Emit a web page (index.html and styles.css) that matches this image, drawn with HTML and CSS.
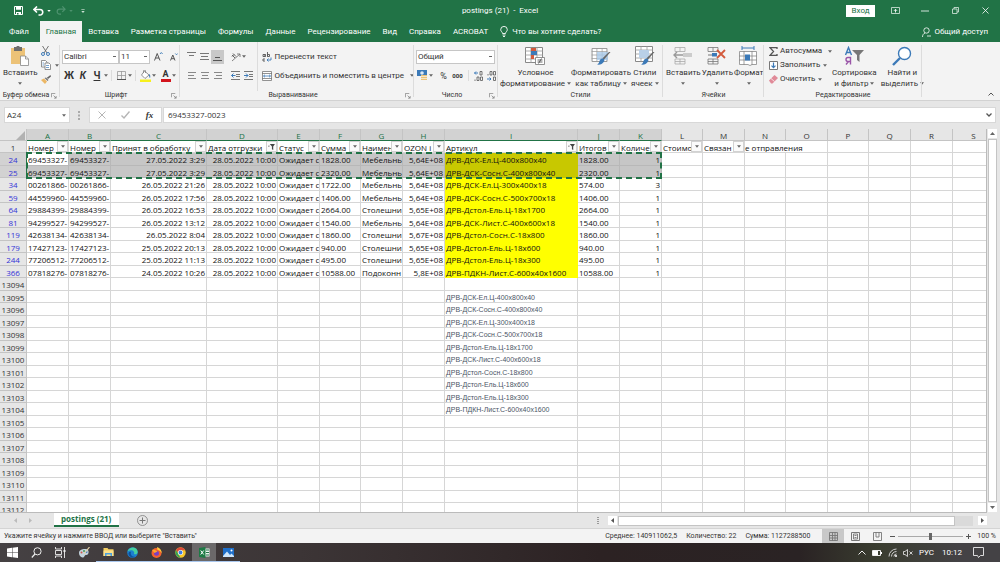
FILE: index.html
```html
<!DOCTYPE html>
<html lang="ru">
<head>
<meta charset="utf-8">
<title>postings (21) - Excel</title>
<link rel="stylesheet" href="styles.css">
</head>
<body>
<svg class="defs" aria-hidden="true">
  <symbol id="caret" viewBox="0 0 5 3"><path d="M0 0h5L2.5 3z" fill="#666"/></symbol>
  <symbol id="launch" viewBox="0 0 7 7"><path d="M.5 5V.5H5M3 3l3 3M6 3.500V6H3.500" fill="none" stroke="#777" stroke-width=".8"/></symbol>
  <symbol id="funnel" viewBox="0 0 8 7"><path d="M2 0h6L6 3v4L4.500 6V3zM0 2h2L1 3.500z" fill="#444"/></symbol>
  <symbol id="gridic" viewBox="0 0 18 16"><path d="M.5.5h17v15H.5z" fill="#fff" stroke="#888"/><path d="M0 4h18M0 8h18M0 12h18M6 0v16M12 0v16" stroke="#999" stroke-width=".8"/></symbol>
  <symbol id="brush" viewBox="0 0 14 14"><path d="M13.500.5L7 8 5.500 6.800 12 .5z" fill="#666"/><path d="M5.500 7c2 0 2.500 2 1.200 3.500C5.500 12.500 3 13.500 0 13c2-1 2-2 2.500-3.500S4 7 5.500 7z" fill="#3c7ab8"/></symbol>
</svg>

<header class="top">
  <div class="titlebar">
    <div class="quick">
      <button class="plain" aria-label="Сохранить"><svg width="9" height="9" viewBox="0 0 9 9"><path d="M.5.5h8v8h-8z" fill="none" stroke="#fff"/><path d="M2 .5h5v3.200H2zM2 6h5v3H2z" fill="#fff"/><path d="M3 7h1.500v1.500H3z" fill="#217346"/></svg></button>
      <button class="plain" aria-label="Отменить"><svg width="11" height="10" viewBox="0 0 11 10"><path d="M1 3.500h6a2.500 2.500 0 010 5.500H5.500M4 .5l-3 3 3 3" fill="none" stroke="#fff" stroke-width="1.600"/></svg></button>
      <svg width="4" height="2" viewBox="0 0 5 3"><path d="M0 0h5L2.500 3z" fill="#fff"/></svg>
      <button class="plain" aria-label="Повторить"><svg width="10" height="9" viewBox="0 0 11 10"><path d="M10 3.500H4A2.500 2.500 0 004 9h1.500M7 .5l3 3-3 3" fill="none" stroke="#4f9370" stroke-width="1.300"/></svg></button>
      <svg width="4" height="2" viewBox="0 0 5 3"><path d="M0 0h5L2.500 3z" fill="#4f9370"/></svg>
      <svg class="more" width="4" height="4" viewBox="0 0 5 6"><path d="M0 3h5L2.500 6z" fill="#cfe3d7"/><path d="M0 .7h5" stroke="#cfe3d7"/></svg>
    </div>
    <h1>postings (21)&nbsp; - &nbsp;Excel</h1>
    <div class="window">
      <button class="login">Вход</button>
      <button class="plain" aria-label="Параметры ленты"><svg width="9" height="7" viewBox="0 0 9 7"><path d="M.5.5h8v6h-8z" fill="none" stroke="#dcebe2" stroke-width=".8"/><path d="M4.500 5.500V2.500M3 3.800l1.500-1.500L6 3.800" fill="none" stroke="#fff" stroke-width=".9"/></svg></button>
      <button class="plain" aria-label="Свернуть"><svg width="8" height="8" viewBox="0 0 8 8"><path d="M0 4h8" stroke="#fff" stroke-width=".8"/></svg></button>
      <button class="plain" aria-label="Восстановить"><svg width="7" height="7" viewBox="0 0 7 7"><path d="M.5 2h4.500v4.500H.5zM2 2V.5h4.500V5H5" fill="none" stroke="#dcebe2" stroke-width=".8"/></svg></button>
      <button class="plain" aria-label="Закрыть"><svg width="7" height="7" viewBox="0 0 7 7"><path d="M.5.5l6 6M6.500.5l-6 6" stroke="#fff" stroke-width=".8"/></svg></button>
    </div>
  </div>
  <nav class="tabs">
    <a href="#">Файл</a><a href="#" class="on">Главная</a><a href="#">Вставка</a><a href="#">Разметка страницы</a><a href="#">Формулы</a><a href="#">Данные</a><a href="#">Рецензирование</a><a href="#">Вид</a><a href="#">Справка</a><a href="#">ACROBAT</a>
    <a href="#" class="tell"><svg width="8" height="11" viewBox="0 0 8 11"><path d="M2.500 7.500C2.500 6 .7 5.500.7 3.700a3.300 3.300 0 016.600 0c0 1.800-1.800 2.300-1.800 3.800zM2.500 9h3M3 10.500h2" fill="none" stroke="#fff" stroke-width=".9"/></svg>Что вы хотите сделать?</a>
    <a href="#" class="share"><svg width="9" height="10" viewBox="0 0 9 10"><circle cx="4.500" cy="3.500" r="2.700" fill="none" stroke="#fff" stroke-width=".8"/><path d="M.5 10C.5 8 1.500 6.500 3 6M5 9h4" fill="none" stroke="#fff" stroke-width=".8"/></svg>Общий доступ</a>
  </nav>
</header>

<section class="ribbon">
  <div class="group clip">
    <div class="body">
      <button class="big"><svg width="20" height="20" viewBox="0 0 20 20"><path d="M1 2h14v16H1z" fill="#ecc277"/><path d="M4 1h2.500a1.500 1.500 0 013 0H12v4H4z" fill="#6d6d6d"/><path d="M10.500 10h5l3 3v6.500h-8z" fill="#fff" stroke="#888" stroke-width=".8"/><path d="M15.500 10v3h3" fill="none" stroke="#888" stroke-width=".8"/></svg><span>Вставить</span><svg class="dd"><use href="#caret"/></svg></button>
      <div class="stack">
        <button class="plain" aria-label="Вырезать"><svg width="9" height="10" viewBox="0 0 9 10"><path d="M1.500 0L6 7M7.500 0L3 7" stroke="#666" stroke-width=".9"/><circle cx="2" cy="8" r="1.500" fill="none" stroke="#3c7ab8"/><circle cx="7" cy="8" r="1.500" fill="none" stroke="#3c7ab8"/></svg></button>
        <button class="plain" aria-label="Копировать"><svg width="10" height="10" viewBox="0 0 10 10"><path d="M.5.5h4l1.500 1.500v5H.5z" fill="#fff" stroke="#777" stroke-width=".8"/><path d="M4 3h4l1.500 1.500v5H4z" fill="#fff" stroke="#777" stroke-width=".8"/><path d="M5 5.500h3M5 7.500h3M1.500 3H3M1.500 5H3" stroke="#3c7ab8" stroke-width=".7"/></svg><svg class="dd"><use href="#caret"/></svg></button>
        <button class="plain" aria-label="Формат по образцу"><svg width="10" height="9" viewBox="0 0 10 9"><path d="M9.500 0L10 1.500 7 4 5.800 2.800z" fill="#666"/><path d="M5 2.500l2.500 2.500-1 1-3-3z" fill="#777"/><path d="M3 3.500L6 6.500 4 9 0 5z" fill="#ecb765"/></svg></button>
      </div>
    </div>
    <h2>Буфер обмена<svg class="ln"><use href="#launch"/></svg></h2>
  </div>

  <div class="group font">
    <div class="body rows">
      <div class="row">
        <select class="fname" aria-label="Шрифт"><option>Calibri</option></select><select class="fsize" aria-label="Размер"><option>11</option></select>
        <button class="tool wide" aria-label="Увеличить шрифт"><svg width="9" height="9" viewBox="0 0 9 9"><path d="M.5 8.500L3.200 1.500 6 8.500M1.500 6h3.500" fill="none" stroke="#555"/><path d="M6 2l1.300-1.500L8.600 2" fill="none" stroke="#3c7ab8" stroke-width=".9"/></svg></button><button class="tool" aria-label="Уменьшить шрифт"><svg width="8" height="8" viewBox="0 0 8 8"><path d="M.5 7.500L2.800 2 5 7.500M1.300 5.700h3" fill="none" stroke="#555"/><path d="M5.300.5l1.200 1.300L7.700.5" fill="none" stroke="#3c7ab8" stroke-width=".9"/></svg></button>
      </div>
      <div class="row tight">
        <button class="tool glyph"><b>Ж</b></button><button class="tool glyph"><b><i>К</i></b></button><button class="tool glyph"><b><u>Ч</u></b></button><svg class="dd"><use href="#caret"/></svg>
        <i class="vr"></i>
        <button class="tool" aria-label="Границы"><svg width="9" height="9" viewBox="0 0 9 9"><path d="M.5.5h8v8h-8zM4.500 0v9M0 4.500h9" fill="none" stroke="#999" stroke-width=".8"/><path d="M0 8.500h9" stroke="#555"/></svg></button><svg class="dd"><use href="#caret"/></svg>
        <i class="vr"></i>
        <button class="tool" aria-label="Цвет заливки"><svg width="11" height="12" viewBox="0 0 11 12"><path d="M4.500 1L9 5 5 8.500 1.500 5z" fill="#fff" stroke="#777" stroke-width=".8"/><path d="M3.500 3V1a1 1 0 012 0v2" fill="none" stroke="#777" stroke-width=".7"/><path d="M9 4c1.500 1 1.500 2.500 1 4-.8-.5-1-2-1-4z" fill="#3c7ab8"/><path d="M0 9.500h11V12H0z" fill="#f7f01c"/></svg></button><svg class="dd"><use href="#caret"/></svg>
        <button class="tool colour" aria-label="Цвет текста"><span class="fc">A</span></button><svg class="dd"><use href="#caret"/></svg>
      </div>
    </div>
    <h2>Шрифт<svg class="ln"><use href="#launch"/></svg></h2>
  </div>

  <div class="group align">
    <div class="body split">
      <div class="rows acol">
        <div class="row">
          <button class="tool" aria-label="По верхнему краю"><svg width="9" height="9"><path d="M0 .5h9M2 3.500h5" stroke="#777"/></svg></button><button class="tool" aria-label="По середине"><svg width="9" height="9"><path d="M0 1.500h9M1 4.500h7M0 7.500h9" stroke="#777"/></svg></button><button class="tool pressed" aria-label="По нижнему краю"><svg width="9" height="9"><path d="M2 5.500h5M0 8.500h9" stroke="#555"/></svg></button>
          <button class="tool after" aria-label="Ориентация"><svg width="10" height="10" viewBox="0 0 10 10"><path d="M1 9L9 2M6 2h3v3" fill="none" stroke="#777" stroke-width=".9"/><path d="M1 3l3 3M2 1.500l3 3M1 4.500l2-2" stroke="#555" stroke-width=".9"/></svg></button><svg class="dd"><use href="#caret"/></svg>
        </div>
        <div class="row">
          <button class="tool" aria-label="По левому краю"><svg width="8" height="7"><path d="M0 .5h8M0 3.500h6M0 6.500h8" stroke="#888"/></svg></button><button class="tool" aria-label="По центру"><svg width="8" height="7"><path d="M0 .5h8M1 3.500h6M0 6.500h8" stroke="#888"/></svg></button><button class="tool" aria-label="По правому краю"><svg width="8" height="7"><path d="M0 .5h8M2 3.500h6M0 6.500h8" stroke="#888"/></svg></button>
          <button class="tool after" aria-label="Уменьшить отступ"><svg width="9" height="9"><path d="M0 .5h9M5 3.500h4M5 5.500h4M0 8.500h9" stroke="#777"/><path d="M4.500 4.500H.5M2.500 2.500l-2 2 2 2" fill="none" stroke="#3c7ab8"/></svg></button><button class="tool" aria-label="Увеличить отступ"><svg width="9" height="9"><path d="M0 .5h9M5 3.500h4M5 5.500h4M0 8.500h9" stroke="#777"/><path d="M0 4.500h4M2 2.500l2 2-2 2" fill="none" stroke="#3c7ab8"/></svg></button>
        </div>
      </div>
      <div class="rows wrapcol">
        <div class="row"><button class="text"><svg width="10" height="10" viewBox="0 0 10 10"><path d="M1 2.500h2v2H1zM3.300 2v3M5.500 0v4.500M5.500 2.500h2v2h-2zM3 7H1v2h2" fill="none" stroke="#555" stroke-width=".9"/><path d="M9 5.500v2.500H5M6.500 6.500L5 8l1.500 1.500" fill="none" stroke="#3c7ab8" stroke-width=".9"/></svg>Перенести текст</button></div>
        <div class="row"><button class="text"><svg width="10" height="10" viewBox="0 0 10 10"><path d="M.5.500h9v9h-9zM0 2.500h10M0 7.500h10" fill="#fff" stroke="#777" stroke-width=".8"/><path d="M1.500 5h7M3 3.700L1.500 5 3 6.300M7 3.700L8.500 5 7 6.300" fill="none" stroke="#3c7ab8" stroke-width=".8"/></svg>Объединить и поместить в центре<svg class="dd"><use href="#caret"/></svg></button></div>
      </div>
    </div>
    <h2>Выравнивание<svg class="ln"><use href="#launch"/></svg></h2>
  </div>

  <div class="group number">
    <div class="body rows">
      <div class="row"><select class="fmt" aria-label="Числовой формат"><option>Общий</option></select></div>
      <div class="row">
        <button class="tool" aria-label="Финансовый формат"><svg width="11" height="11" viewBox="0 0 11 11"><path d="M0 0h10v6H0z" fill="#3c7ab8"/><circle cx="5" cy="3" r="1.800" fill="#dce9f5"/><path d="M4 5h6v5H4z" fill="#ecc277"/><path d="M4 6.500h6M4 8.500h6" stroke="#fff" stroke-width=".6"/></svg></button><svg class="dd"><use href="#caret"/></svg>
        <button class="tool num">%</button><button class="tool zero">000</button>
        <i class="vr"></i>
        <button class="tool" aria-label="Увеличить разрядность"><svg width="9" height="10" viewBox="0 0 9 10"><path d="M4 2H.5M2 .5L.5 2 2 3.500" fill="none" stroke="#3c7ab8"/><path d="M6 .5h2v3.500H6zM3 6h2v3.500H3zM6.500 6h2v3.500h-2zM1 8.500V10" fill="none" stroke="#555" stroke-width=".8"/></svg></button><button class="tool" aria-label="Уменьшить разрядность"><svg width="9" height="10" viewBox="0 0 9 10"><path d="M0 8h4M2.500 6.500L4 8 2.500 9.500" fill="none" stroke="#3c7ab8"/><path d="M3 .5h2v3.500H3zM6.500.5h2v3.500h-2zM6.500 6h2v3.500h-2zM1 3v1.500" fill="none" stroke="#555" stroke-width=".8"/></svg></button>
      </div>
    </div>
    <h2>Число<svg class="ln"><use href="#launch"/></svg></h2>
  </div>

  <div class="group styles">
    <div class="body">
      <button class="big two"><svg width="20" height="20" viewBox="0 0 20 20"><use href="#gridic" width="18" height="16" y="1"/><path d="M6 2h5v3H6zM6 9h3v4H6z" fill="#d35a3c"/><path d="M6 5h6v4H6z" fill="#3c7ab8"/><path d="M10.500 11.500h9v7h-9z" fill="#fff" stroke="#777" stroke-width=".8"/><path d="M12.500 14h5M12.500 16h5M16.500 12.500l-3 5" stroke="#444" stroke-width=".8"/></svg><span>Условное<br>форматирование <svg class="dd"><use href="#caret"/></svg></span></button>
      <button class="big two"><svg width="20" height="20" viewBox="0 0 20 20"><use href="#gridic" width="17" height="14" y="2"/><path d="M6 6h11v8H6z" fill="#a9c9e8" opacity=".8"/><use href="#brush" x="6" y="5" width="14" height="15"/></svg><span>Форматировать<br>как таблицу <svg class="dd"><use href="#caret"/></svg></span></button>
      <button class="big two"><svg width="20" height="20" viewBox="0 0 20 20"><use href="#gridic" width="18" height="16" y="0"/><path d="M4 4h10v8H4z" fill="#b9d0e8"/><use href="#brush" x="6" y="5" width="14" height="15"/></svg><span>Стили<br>ячеек <svg class="dd"><use href="#caret"/></svg></span></button>
    </div>
    <h2>Стили</h2>
  </div>

  <div class="group cells">
    <div class="body">
      <button class="big"><svg width="20" height="20" viewBox="0 0 20 20"><path d="M2 1.500h10v4H2zM7 1.500v4M2 13h10v5H2zM7 13v5M2 15.500h10" fill="none" stroke="#aaa" stroke-width=".8"/><path d="M10 7h9v4h-9z" fill="#ccc"/><path d="M10 9H1M4 6L1 9l3 3" fill="none" stroke="#999" stroke-width="1.400"/></svg><span>Вставить</span><svg class="dd"><use href="#caret"/></svg></button>
      <button class="big"><svg width="20" height="20" viewBox="0 0 20 20"><path d="M1 1.500h10v4H1zM6 1.500v4M1 13h10v5H1zM6 13v5M1 15.500h10" fill="none" stroke="#777" stroke-width=".8"/><path d="M5 7h5v3.500H5z" fill="#3c7ab8"/><path d="M1 9h4" stroke="#777"/><path d="M10 4l8 8M18 4l-8 8" stroke="#d35a3c" stroke-width="1.800"/></svg><span>Удалить</span><svg class="dd"><use href="#caret"/></svg></button>
      <button class="big"><svg width="20" height="20" viewBox="0 0 20 20"><path d="M3 2h12M3 0v4M15 0v4" stroke="#3c7ab8"/><path d="M.5 5.500h17v13H13l-2 1-2-1H.5zM5 5v14M13 5v14M0 10h18M0 14h18" fill="#fff" stroke="#888" stroke-width=".8"/><path d="M6 8.500h5v6H6z" fill="#3c7ab8"/></svg><span>Формат</span><svg class="dd"><use href="#caret"/></svg></button>
    </div>
    <h2>Ячейки</h2>
  </div>

  <div class="group edit">
    <div class="body">
      <div class="stack lines">
        <button class="text"><svg width="9" height="9" viewBox="0 0 9 9"><path d="M8 2V.7H1L4.500 4.500 1 8.300h7V7" fill="none" stroke="#555" stroke-width="1.300"/></svg>Автосумма <svg class="dd far"><use href="#caret"/></svg></button>
        <button class="text"><svg width="9" height="9" viewBox="0 0 9 9"><path d="M.5.5h8v8h-8z" fill="#fff" stroke="#777"/><path d="M4.500 1.500v5M2.500 4.700l2 2 2-2" fill="none" stroke="#3c7ab8" stroke-width="1.200"/></svg>Заполнить<svg class="dd"><use href="#caret"/></svg></button>
        <button class="text"><svg width="9" height="9" viewBox="0 0 9 9"><path d="M0 5.500L5.500 0 9 3 3.500 8.500H2z" fill="#e08a98"/><path d="M2 3.500L5.500 6.500" stroke="#fff" stroke-width=".7"/></svg>Очистить<svg class="dd"><use href="#caret"/></svg></button>
      </div>
      <button class="big two"><svg width="20" height="20" viewBox="0 0 20 20"><path d="M1.500 9L4.500 1.500 7.500 9M2.500 6.500h4" fill="none" stroke="#3c7ab8" stroke-width="1.400"/><path d="M6.500 18.500V11.500H4a2 2 0 000 4h2.500M4.500 15.500l-2.500 3" fill="none" stroke="#9a55a8" stroke-width="1.400"/><path d="M8 4h12l-4.500 5v7L13 14V9z" fill="#777"/></svg><span>Сортировка<br>и фильтр <svg class="dd"><use href="#caret"/></svg></span></button>
      <button class="big two"><svg width="20" height="20" viewBox="0 0 20 20"><circle cx="12.500" cy="7.500" r="6" fill="#fff" stroke="#3c7ab8" stroke-width="1.400"/><path d="M8 12l-7 7" stroke="#3c7ab8" stroke-width="2.400"/></svg><span>Найти и<br>выделить <svg class="dd"><use href="#caret"/></svg></span></button>
    </div>
    <h2>Редактирование</h2>
  </div>
  <button class="plain collapse" aria-label="Свернуть ленту"><svg width="6" height="4"><path d="M.5 3.500L3 1l2.500 2.500" fill="none" stroke="#555"/></svg></button>
</section>

<section class="formula">
  <div class="namebox"><input aria-label="Имя" value="A24"><svg class="dd"><use href="#caret"/></svg></div>
  <svg class="dots" width="3" height="9"><path d="M1 0v2M1 3.500v2M1 7v2" stroke="#aaa" stroke-width="2"/></svg>
  <div class="fx">
    <button class="plain" aria-label="Отмена"><svg width="8" height="8"><path d="M.5.5l7 7M7.500.5l-7 7" stroke="#b5b5b5"/></svg></button>
    <button class="plain" aria-label="Ввод"><svg width="9" height="8"><path d="M.5 4.500L3 7l5.500-6.500" fill="none" stroke="#b5b5b5" stroke-width="1.400"/></svg></button>
    <button class="plain fn" aria-label="Вставить функцию"><i>fx</i></button>
  </div>
  <div class="fbox"><input aria-label="Строка формул" value="69453327-0023"><svg width="6" height="4" viewBox="0 0 6 4"><path d="M.5.500L3 3 5.500.5" fill="none" stroke="#555" stroke-width="1.300"/></svg></div>
</section>

<main class="work">
  <div class="sheet">
    <table>
      <colgroup><col class="rh"><col class="w42"><col class="w42"><col class="w96"><col class="w71"><col class="w42"><col class="w41"><col class="w42"><col class="w42"><col class="w133"><col class="w42"><col class="w42"><col class="w41"><col class="w42"><col class="w41"><col class="w42"><col class="w41"><col class="w42"><col class="w42"><col class="w42"></colgroup>
      <thead>
        <tr><th class="corner"><svg width="9" height="9"><path d="M9 0v9H0z" fill="#b2b2b2"/></svg><th class="s">A<th class="s">B<th class="s">C<th class="s">D<th class="s">E<th class="s">F<th class="s">G<th class="s">H<th class="s">I<th class="s">J<th class="s">K<th>L<th>M<th>N<th>O<th>P<th>Q<th>R<th>S
      </thead>
      <tbody>
        <tr class="names"><th>1
          <td><div><span>Номер</span><button aria-label="Фильтр"><svg class="dd"><use href="#caret"/></svg></button></div>
          <td><div><span>Номер</span><button aria-label="Фильтр"><svg class="dd"><use href="#caret"/></svg></button></div>
          <td><div><span>Принят в обработку</span><button aria-label="Фильтр"><svg class="dd"><use href="#caret"/></svg></button></div>
          <td><div><span>Дата отгрузки</span><button aria-label="Фильтр"><svg class="fu"><use href="#funnel"/></svg></button></div>
          <td><div><span>Статус</span><button aria-label="Фильтр"><svg class="dd"><use href="#caret"/></svg></button></div>
          <td><div><span>Сумма</span><button aria-label="Фильтр"><svg class="dd"><use href="#caret"/></svg></button></div>
          <td><div><span>Наимен</span><button aria-label="Фильтр"><svg class="dd"><use href="#caret"/></svg></button></div>
          <td><div><span>OZON i</span><button aria-label="Фильтр"><svg class="dd"><use href="#caret"/></svg></button></div>
          <td><div><span>Артикул</span><button aria-label="Фильтр"><svg class="fu"><use href="#funnel"/></svg></button></div>
          <td><div><span>Итогов</span><button aria-label="Фильтр"><svg class="dd"><use href="#caret"/></svg></button></div>
          <td><div><span>Количе</span><button aria-label="Фильтр"><svg class="dd"><use href="#caret"/></svg></button></div>
          <td><div><span>Стоимо</span><button aria-label="Фильтр"><svg class="dd"><use href="#caret"/></svg></button></div>
          <td><div><span>Связан</span><button aria-label="Фильтр"><svg class="dd"><use href="#caret"/></svg></button></div>
          <td colspan="2" class="spill">е отправления<td><td><td><td>
        <tr class="f sel"><th>24<td class="active">69453327-<td>69453327-<td class="r">27.05.2022 3:29<td class="r">28.05.2022 10:00<td>Ожидает с<td>1828.00<td>Мебельнь<td class="r">5,64E+08<td class="y">ДРВ-ДСК-Ел.Ц-400x800x40<td>1828.00<td class="r">1<td><td><td><td><td><td><td><td>
        <tr class="f sel"><th>25<td>69453327-<td>69453327-<td class="r">27.05.2022 3:29<td class="r">28.05.2022 10:00<td>Ожидает с<td>2320.00<td>Мебельнь<td class="r">5,64E+08<td class="y">ДРВ-ДСК-Сосн.С-400x800x40<td>2320.00<td class="r">1<td><td><td><td><td><td><td><td>
        <tr class="f"><th>34<td>00261866-<td>00261866-<td class="r">26.05.2022 21:26<td class="r">28.05.2022 10:00<td>Ожидает с<td>1722.00<td>Мебельнь<td class="r">5,64E+08<td class="y">ДРВ-ДСК-Ел.Ц-300x400x18<td>574.00<td class="r">3<td><td><td><td><td><td><td><td>
        <tr class="f"><th>59<td>44559960-<td>44559960-<td class="r">26.05.2022 17:56<td class="r">28.05.2022 10:00<td>Ожидает с<td>1406.00<td>Мебельнь<td class="r">5,64E+08<td class="y">ДРВ-ДСК-Сосн.С-500x700x18<td>1406.00<td class="r">1<td><td><td><td><td><td><td><td>
        <tr class="f"><th>64<td>29884399-<td>29884399-<td class="r">26.05.2022 16:53<td class="r">28.05.2022 10:00<td>Ожидает с<td>2664.00<td>Столешни<td class="r">5,65E+08<td class="y">ДРВ-Дстол-Ель.Ц-18x1700<td>2664.00<td class="r">1<td><td><td><td><td><td><td><td>
        <tr class="f"><th>81<td>94299527-<td>94299527-<td class="r">26.05.2022 13:12<td class="r">28.05.2022 10:00<td>Ожидает с<td>1540.00<td>Мебельнь<td class="r">5,64E+08<td class="y">ДРВ-ДСК-Лист.С-400x600x18<td>1540.00<td class="r">1<td><td><td><td><td><td><td><td>
        <tr class="f"><th>119<td>42638134-<td>42638134-<td class="r">26.05.2022 8:04<td class="r">28.05.2022 10:00<td>Ожидает с<td>1860.00<td>Столешни<td class="r">5,67E+08<td class="y">ДРВ-Дстол-Сосн.С-18x800<td>1860.00<td class="r">1<td><td><td><td><td><td><td><td>
        <tr class="f"><th>179<td>17427123-<td>17427123-<td class="r">25.05.2022 20:13<td class="r">28.05.2022 10:00<td>Ожидает с<td>940.00<td>Столешни<td class="r">5,65E+08<td class="y">ДРВ-Дстол-Ель.Ц-18x600<td>940.00<td class="r">1<td><td><td><td><td><td><td><td>
        <tr class="f"><th>244<td>77206512-<td>77206512-<td class="r">25.05.2022 11:13<td class="r">28.05.2022 10:00<td>Ожидает с<td>495.00<td>Столешни<td class="r">5,65E+08<td class="y">ДРВ-Дстол-Ель.Ц-18x300<td>495.00<td class="r">1<td><td><td><td><td><td><td><td>
        <tr class="f"><th>366<td>07818276-<td>07818276-<td class="r">24.05.2022 10:26<td class="r">28.05.2022 10:00<td>Ожидает с<td>10588.00<td>Подоконн<td class="r">5,8E+08<td class="y">ДРВ-ПДКН-Лист.С-600x40x1600<td>10588.00<td class="r">1<td><td><td><td><td><td><td><td>
        <tr><th>13094<td><td><td><td><td><td><td><td><td class="n"><td><td><td><td><td><td><td><td><td><td>
        <tr><th>13095<td><td><td><td><td><td><td><td><td class="n">ДРВ-ДСК-Ел.Ц-400x800x40<td><td><td><td><td><td><td><td><td><td>
        <tr><th>13096<td><td><td><td><td><td><td><td><td class="n">ДРВ-ДСК-Сосн.С-400x800x40<td><td><td><td><td><td><td><td><td><td>
        <tr><th>13097<td><td><td><td><td><td><td><td><td class="n">ДРВ-ДСК-Ел.Ц-300x400x18<td><td><td><td><td><td><td><td><td><td>
        <tr><th>13098<td><td><td><td><td><td><td><td><td class="n">ДРВ-ДСК-Сосн.С-500x700x18<td><td><td><td><td><td><td><td><td><td>
        <tr><th>13099<td><td><td><td><td><td><td><td><td class="n">ДРВ-Дстол-Ель.Ц-18x1700<td><td><td><td><td><td><td><td><td><td>
        <tr><th>13100<td><td><td><td><td><td><td><td><td class="n">ДРВ-ДСК-Лист.С-400x600x18<td><td><td><td><td><td><td><td><td><td>
        <tr><th>13101<td><td><td><td><td><td><td><td><td class="n">ДРВ-Дстол-Сосн.С-18x800<td><td><td><td><td><td><td><td><td><td>
        <tr><th>13102<td><td><td><td><td><td><td><td><td class="n">ДРВ-Дстол-Ель.Ц-18x600<td><td><td><td><td><td><td><td><td><td>
        <tr><th>13103<td><td><td><td><td><td><td><td><td class="n">ДРВ-Дстол-Ель.Ц-18x300<td><td><td><td><td><td><td><td><td><td>
        <tr><th>13104<td><td><td><td><td><td><td><td><td class="n">ДРВ-ПДКН-Лист.С-600x40x1600<td><td><td><td><td><td><td><td><td><td>
        <tr><th>13105<td><td><td><td><td><td><td><td><td class="n"><td><td><td><td><td><td><td><td><td><td>
        <tr><th>13106<td><td><td><td><td><td><td><td><td class="n"><td><td><td><td><td><td><td><td><td><td>
        <tr><th>13107<td><td><td><td><td><td><td><td><td class="n"><td><td><td><td><td><td><td><td><td><td>
        <tr><th>13108<td><td><td><td><td><td><td><td><td class="n"><td><td><td><td><td><td><td><td><td><td>
        <tr><th>13109<td><td><td><td><td><td><td><td><td class="n"><td><td><td><td><td><td><td><td><td><td>
        <tr><th>13110<td><td><td><td><td><td><td><td><td class="n"><td><td><td><td><td><td><td><td><td><td>
        <tr><th>13111<td><td><td><td><td><td><td><td><td class="n"><td><td><td><td><td><td><td><td><td><td>
        <tr><th>13112<td><td><td><td><td><td><td><td><td class="n"><td><td><td><td><td><td><td><td><td><td>
      </tbody>
    </table>
    <div class="ants"></div>
  </div>
  <div class="vscroll">
    <button aria-label="Вверх"><svg width="5" height="3"><path d="M0 3h5L2.500 0z" fill="#666"/></svg></button>
    <div class="thumb"></div>
    <button aria-label="Вниз"><svg width="5" height="3"><path d="M0 0h5L2.500 3z" fill="#666"/></svg></button>
  </div>
</main>

<div class="sheetbar">
  <div class="arrows"><svg width="3" height="5"><path d="M3 0v5L0 2.500z" fill="#bbb"/></svg><svg width="3" height="5"><path d="M0 0v5l3-2.500z" fill="#bbb"/></svg></div>
  <a href="#" class="stab">postings (21)</a>
  <button class="plain add" aria-label="Новый лист"><svg width="11" height="11" viewBox="0 0 11 11"><circle cx="5.500" cy="5.500" r="5" fill="none" stroke="#888" stroke-width=".9"/><path d="M5.500 2.500v6M2.500 5.500h6" stroke="#777"/></svg></button>
  <svg class="dots" width="3" height="8"><path d="M1 0v1M1 2v1M1 4v1M1 6v1" stroke="#999" stroke-width="2"/></svg>
  <div class="hscroll">
    <button aria-label="Влево"><svg width="3" height="5"><path d="M3 0v5L0 2.500z" fill="#555"/></svg></button>
    <div class="track"><div class="thumb"></div></div>
    <button aria-label="Вправо"><svg width="3" height="5"><path d="M0 0v5l3-2.500z" fill="#555"/></svg></button>
  </div>
</div>

<footer class="status">
  <span class="hint">Укажите ячейку и нажмите ВВОД или выберите "Вставить"</span>
  <span>Среднее: 140911062,5</span><span>Количество: 22</span><span>Сумма: 1127288500</span>
  <div class="views">
    <button class="on" aria-label="Обычный"><svg width="9" height="9"><path d="M.5.5h8v8h-8zM0 3.500h9M0 6h9M3.500 0v9M6 0v9" fill="none" stroke="#777" stroke-width=".9"/></svg></button>
    <button aria-label="Разметка страницы"><svg width="9" height="9"><path d="M.5.5h8v8h-8z" fill="none" stroke="#777"/><path d="M2.500 2h4v5h-4zM3.500 3.500h2M3.500 5.500h2" fill="none" stroke="#777" stroke-width=".9"/></svg></button>
    <button aria-label="Страничный"><svg width="9" height="9"><path d="M.5.5h8v8h-8zM3 0v5h3V0" fill="none" stroke="#777" stroke-width=".9"/></svg></button>
  </div>
  <div class="zoom"><button class="plain" aria-label="Уменьшить"><svg width="5" height="5"><path d="M0 2.500h5" stroke="#555"/></svg></button><input type="range" min="0" max="200" value="100" aria-label="Масштаб"><button class="plain" aria-label="Увеличить"><svg width="5" height="5"><path d="M0 2.500h5M2.500 0v5" stroke="#555"/></svg></button></div>
  <span class="pct">100 %</span>
</footer>

<div class="taskbar">
  <button aria-label="Пуск"><svg width="11" height="11" viewBox="0 0 11 11"><path d="M0 1.500L5 .8v4.500H0zM5.500.7L11 0v5.300H5.500zM0 5.800h5v4.400l-5-.7zM5.500 5.800H11V11l-5.500-.7z" fill="#fff"/></svg></button>
  <button aria-label="Поиск"><svg width="11" height="11" viewBox="0 0 11 11"><circle cx="6.500" cy="4.300" r="3.600" fill="none" stroke="#eee"/><path d="M4 7L.8 10.500" stroke="#eee" stroke-width="1.200"/></svg></button>
  <button aria-label="Представление задач"><svg width="11" height="11" viewBox="0 0 11 11"><path d="M.5 0v2h6V0M.5 11V9h6v2M.5 3.500h6v4h-6zM9.500 0v11" fill="none" stroke="#eee" stroke-width=".9"/><path d="M8.500 3h2v2h-2z" fill="#eee"/></svg></button>
  <button aria-label="Paint"><svg width="12" height="11" viewBox="0 0 12 11"><path d="M1 6c0-3 3-4 6-4s4 2 3.500 4-2 2-3 2-1 3-3 2.500S1 8.500 1 6z" fill="#c3d3dc"/><circle cx="3.500" cy="5.500" r="1" fill="#d0564a"/><circle cx="6" cy="4" r="1" fill="#4a9a5a"/><circle cx="8.500" cy="5" r="1" fill="#3f75c0"/><path d="M11.500 0L6 7" stroke="#e6d2a8" stroke-width="1.200"/></svg></button>
  <button class="run" aria-label="Проводник"><svg width="11" height="10" viewBox="0 0 11 10"><path d="M.5 1h4l1 1.200h5V9H.5z" fill="#f5cf62"/><path d="M.5 3.500h10V9H.5z" fill="#fbe08c"/><path d="M2 9V6h7v3H7.500V7.500h-4V9z" fill="#4aa0dd"/></svg></button>
  <button class="run" aria-label="Edge"><svg width="11" height="11" viewBox="0 0 11 11"><circle cx="5.500" cy="5.500" r="5.300" fill="#1c7fd0"/><path d="M.5 4.500C1.500 1 5 0 7.500.7S11 4 10.500 6C9.500 8 7 7 7 7c1-2-1-4-3-3.800S1 4 .5 4.500z" fill="#45cfa0"/><path d="M4 5c-1 2 .5 5 4 4.800C5 12 1 9 1.500 6 2 5 3 4.500 4 5z" fill="#0e529c"/></svg></button>
  <button class="run" aria-label="Firefox"><svg width="11" height="11" viewBox="0 0 11 11"><circle cx="5.500" cy="6" r="5" fill="#f5622d"/><path d="M6 0c3 1 5 3.500 4.700 6.500C10 4.500 8 3 6.500 3z" fill="#ffcb3d"/><circle cx="5.500" cy="6.200" r="2.500" fill="#7a3fc2"/><path d="M1 3c1.500-.5 4 0 5.500 1.500L3.500 6z" fill="#ffa52b"/></svg></button>
  <button class="run" aria-label="Chrome"><svg width="11" height="11" viewBox="0 0 11 11"><circle cx="5.500" cy="5.500" r="5.200" fill="#f6c62c"/><path d="M1 3a5.200 5.200 0 019.200.2H5.500L3.500 6z" fill="#dd4a3a"/><path d="M1 3l3 5.200 1.500 2.500A5.200 5.200 0 011 3z" fill="#36a355"/><circle cx="5.500" cy="5.500" r="2.500" fill="#fff"/><circle cx="5.500" cy="5.500" r="1.900" fill="#3f7de0"/></svg></button>
  <button class="run on" aria-label="Excel"><svg width="11" height="11" viewBox="0 0 11 11"><path d="M6 1.500h4.500v8H6z" fill="#e8f3ec"/><path d="M7 3h3M7 5.500h3M7 8h3" stroke="#217346"/><path d="M0 1l6.500-1v11L0 10z" fill="#1d7a45"/><path d="M1.700 3.500l3 4M4.700 3.500l-3 4" stroke="#fff"/></svg></button>
  <button class="run" aria-label="Фотографии"><svg width="11" height="9" viewBox="0 0 11 9"><path d="M0 0h11v9H0z" fill="#1f6fc9"/><path d="M0 8l4-4.500L7 7l1.500-1.500L11 8v1H0z" fill="#cfe6fb"/><circle cx="8.500" cy="2.500" r="1" fill="#fff"/></svg></button>
  <div class="tray">
    <svg width="8" height="5"><path d="M.5 4.500L4 1l3.500 3.500" fill="none" stroke="#eee"/></svg>
    <svg width="10" height="6"><path d="M.5.5h8v5h-8z" fill="none" stroke="#eee"/><path d="M1 1h5v4H1zM9 2h1v2H9z" fill="#fff"/></svg>
    <svg width="9" height="9"><path d="M1 8.500A7.500 7.500 0 018.500 1M3.500 8.500a5 5 0 015-5M6 8.500A2.500 2.500 0 018.500 6" fill="none" stroke="#ccc"/><circle cx="8" cy="8" r="1" fill="#fff"/></svg>
    <svg width="10" height="8"><path d="M.5 2.500H2L4.500.5v7L2 5.500H.5zM6.500 2.500l3 3M9.500 2.500l-3 3" fill="none" stroke="#ddd" stroke-width=".9"/></svg>
    <span>РУС</span><time>10:12</time>
    <svg width="11" height="11"><path d="M.5.5h10v8h-3l-2 2-1-2h-4z" fill="none" stroke="#eee" stroke-width=".9"/></svg>
  </div>
</div>
</body>
</html>
```

FILE: styles.css
```css
* { box-sizing: border-box; }

body {
  margin: 0;
  height: 100vh;
  display: flex;
  flex-direction: column;
  overflow: hidden;
  background: #e6e6e6;
  color: #333;
  font: 8px/10px Roboto, "Open Sans", sans-serif;
}

button, input, select { font: inherit; color: inherit; margin: 0; padding: 0; border: 0; background: none; }
a { color: inherit; text-decoration: none; }
h1, h2 { margin: 0; font: inherit; }
svg { display: block; flex: none; }
.defs { position: absolute; width: 0; height: 0; }
.dd { width: 4px; height: 3px; }
.plain { display: flex; align-items: center; justify-content: center; }
.dots { flex: none; }

/* Title and tabs */
.top { background: #217346; color: #fff; }
.titlebar { height: 21px; display: grid; grid-template-columns: 1fr auto 1fr; align-items: center; }
.quick { display: flex; align-items: center; padding-left: 14px; gap: 3px; }
.quick .plain:nth-child(2) { margin-left: 7px; }
.quick .plain:nth-child(4) { margin-left: 2px; }
.quick .more { margin-left: 5px; }
.window { display: flex; align-items: center; justify-content: flex-end; gap: 14px; padding-right: 7px; }
.window .plain { width: 16px; height: 16px; }
.window .login { background: #fff; color: #217346; width: 29px; height: 12px; margin-right: -2px; }
.tabs { height: 21px; display: flex; align-items: stretch; padding-left: 2px; }
.tabs a { display: flex; align-items: center; padding: 0 6px; white-space: nowrap; }
.tabs a:first-child { padding: 0 11px 0 7px; }
.tabs .on { background: #f3f3f3; color: #217346; }
.tabs .tell { gap: 4px; }
.tabs .share { margin-left: auto; gap: 3px; padding-right: 12px; }

/* Ribbon */
.ribbon { display: flex; height: 59px; background: #f3f3f3; border-bottom: 1px solid #d2d2d2; position: relative; }
.group { display: flex; flex-direction: column; flex: none; position: relative; }
.group::after { content: ""; position: absolute; right: 0; top: 3px; bottom: 3px; width: 1px; background: #dcdcdc; }
.group h2 { display: flex; justify-content: center; font-size: 7px; line-height: 9px; white-space: nowrap; position: relative; padding-right: 8px; }
.ln { width: 6px; height: 6px; position: absolute; right: 3px; top: 2px; }
.body { height: 49px; display: flex; padding-top: 4px; }
.clip { width: 60px; }
.font { width: 120px; }
.align { width: 234px; }
.number { width: 84px; }
.styles { width: 165px; }
.cells { width: 101px; }
.edit { width: 158px; }
.styles h2, .cells h2, .edit h2 { padding-right: 0; }

.big { display: flex; flex-direction: column; align-items: center; white-space: nowrap; }
.big > span { line-height: 11px; margin-top: 1px; }
.big > .dd { margin-top: 4px; }
.big span .dd { display: inline-block; vertical-align: middle; }
.clip .body { padding-left: 3px; gap: 3px; }
.stack { display: flex; flex-direction: column; gap: 4px; align-items: flex-start; }
.stack .plain { height: 10px; gap: 4px; }

.rows { flex-direction: column; gap: 4px; padding-top: 7px; }
.row { display: flex; align-items: center; height: 15px; }
.font .rows, .number .rows { padding-left: 2px; }
select { appearance: none; height: 14px; border: 1px solid #c6c6c6; background: #fff linear-gradient(#666, #666) no-repeat right 2px center / 3px 1px; padding-left: 1px; }
.fname { width: 59px; }
.fsize { width: 32px; }
.fmt { width: 79px; }
.tool { width: 13px; height: 14px; display: flex; flex: none; align-items: center; justify-content: center; }
.tool.wide { width: 17px; }
.tool.after { margin-left: 5px; }
.tool.colour { margin-left: 3px; }
.tool.pressed { background: #c8c8c8; }
.glyph { font-size: 10px; width: 14px; }
.vr { width: 1px; height: 11px; margin: 0 3px; background: #dcdcdc; }
.fc { font-size: 9px; font-weight: 700; line-height: 9px; width: 10px; border-bottom: 3px solid #d3141c; }
.num { font-size: 9px; margin-left: 4px; }
.zero { font-size: 6px; font-weight: 700; width: 15px; }

.split { padding-top: 0; }
.split .rows { display: flex; }
.acol { width: 79px; padding-left: 5px; }
.wrapcol { padding-left: 4px; border-left: 1px solid #dcdcdc; }
.text { display: flex; align-items: center; gap: 2px; white-space: nowrap; }
.text .dd { margin-left: 4px; }

.styles .body { padding-left: 2px; }
.cells .body { padding-left: 3px; gap: 1px; }
.edit .body { padding-left: 5px; gap: 4px; padding-top: 4px; }
.edit .lines { gap: 0; width: 59px; margin-top: -2px; }
.lines .text { height: 14px; }
.lines .text .dd { margin-left: 1px; }
.lines .text .far { margin-left: 4px; }
.collapse { position: absolute; right: 4px; bottom: 3px; width: 10px; height: 6px; }

/* Formula bar */
.formula { display: flex; align-items: center; height: 28px; padding: 0 4px 0 4px; font-family: "Open Sans", "Noto Sans", sans-serif; }
.namebox, .fx, .fbox { height: 16px; background: #fff; border: 1px solid #d8d8d8; display: flex; align-items: center; }
.namebox { width: 66px; padding: 0 3px 0 2px; }
.namebox input { width: 100%; min-width: 0; }
.formula .dots { margin: 0 8px; }
.fx { width: 73px; justify-content: space-around; }
.fn { font: 700 9px "Liberation Serif", serif; }
.fbox { flex: 1; margin-left: 1px; padding: 0 3px 0 4px; }
.fbox input { flex: 1; }

/* Grid */
.work { flex: 1; min-height: 0; display: flex; font-family: "Open Sans", "Noto Sans", sans-serif; }
.sheet { flex: 1; min-width: 0; overflow: hidden; position: relative; background: #fff; border-right: 1px solid #bbb; border-bottom: 1px solid #bbb; }
table { width: 820px; table-layout: fixed; border-collapse: separate; border-spacing: 0; }
.rh { width: 27px; }
.w41 { width: 41px; }
.w42 { width: 42px; }
.w71 { width: 71px; }
.w96 { width: 96px; }
.w133 { width: 133px; }
th, td { height: 12px; padding: 2px 1px 0; line-height: 9px; border-right: 1px solid #d6d6d6; border-bottom: 1px solid #d6d6d6; white-space: nowrap; overflow: hidden; text-align: left; font-weight: 400; color: #111; }
tbody tr:nth-child(even) > * { height: 13px; line-height: 10px; }
th { background: #e6e6e6; text-align: center; padding: 2px 0 0; color: #333; border-color: #c4c4c4; }
thead .s { background: #d2d2d2; color: #217346; border-bottom-color: #217346; }
.corner { padding: 1px 2px 0 16px; }
.f th { color: #3434d6; }
.r { text-align: right; }
.y { background: #ff0; border-color: #ff0; }
.sel td:nth-child(-n+12) { background: #c6c6c6; border-color: #b8b8b8; }
.sel th { background: #d2d2d2; border-right-color: #217346; }
.sel td.y:nth-child(10) { background: #c8c800; border-color: #c8c800; }
.sel td.active:nth-child(2) { background: #fff; }
.n { font-family: "Liberation Sans", sans-serif; font-size: 7px; color: #4c5566; }
.names td { padding: 0 0 0 1px; }
.names div { display: flex; align-items: center; height: 11px; }
.names span { flex: 1; min-width: 0; overflow: hidden; line-height: 9px; padding-top: 2px; }
.names button { flex: none; width: 11px; height: 11px; border: 1px solid #d2d2d2; background: #fbfbfb; display: flex; align-items: center; justify-content: center; }
.names .spill { padding: 2px 0 0; }
.fu { width: 7px; height: 6px; }
.ants { position: absolute; left: 26px; top: 23px; width: 636px; height: 27px; border: 2px dashed #217346; }

.vscroll { width: 13px; display: flex; flex-direction: column; gap: 1px; padding: 0 2px 1px 1px; }
.vscroll button, .hscroll button { background: #fff; display: flex; flex: none; align-items: center; justify-content: center; width: 9px; height: 9px; }
.vscroll .thumb { flex: 1; width: 9px; background: #fff; border: 1px solid #c4c4c4; }

.sheetbar { height: 15px; display: flex; align-items: center; padding-right: 13px; }
.arrows { width: 54px; display: flex; gap: 12px; padding-left: 14px; }
.stab { align-self: stretch; background: #fff; color: #217346; font: 700 8px/12px "Open Sans", "Noto Sans", sans-serif; padding: 0 8px 0 7px; border-bottom: 2px solid #217346; margin-bottom: 1px; }
.add { margin-left: 18px; margin-right: auto; }
.hscroll { width: 379px; display: flex; align-items: center; gap: 1px; margin-left: 8px; }
.track { flex: 1; background: #dadada; margin-right: 4px; }
.track .thumb { width: 95%; height: 10px; background: #fff; border: 1px solid #c4c4c4; }

/* Status bar */
.status { height: 15px; display: flex; align-items: center; gap: 9px; background: #f3f3f3; border-top: 1px solid #d4d4d4; font-size: 7px; padding: 0 4px; white-space: nowrap; }
.hint { margin-right: auto; }
.views { display: flex; align-self: stretch; margin-left: 3px; }
.views button { width: 22px; display: flex; align-items: center; justify-content: center; }
.views .on { background: #c8c8c8; }
.zoom { display: flex; align-items: center; gap: 3px; margin-left: -7px; }
.zoom input { appearance: none; width: 65px; height: 9px; background: linear-gradient(#aaa, #aaa) no-repeat center / 100% 1px; }
.zoom input::-webkit-slider-thumb { appearance: none; width: 3px; height: 7px; background: #666; }
.pct { margin-left: -3px; }

/* Taskbar */
.taskbar { height: 19px; display: flex; background: linear-gradient(90deg, #454143, #3c3536 30%, #2c2223 60%, #2a2324 80%, #3a3d30 88%, #444245 96%); color: #fff; }
.taskbar button { width: 24px; display: flex; align-items: center; justify-content: center; border-bottom: 1px solid transparent; }
.taskbar .run { border-bottom-color: #a9c7ee; }
.taskbar .on { background: #6b696a; }
.tray { margin-left: auto; display: flex; align-items: center; gap: 6px; padding-right: 16px; }
.tray time { margin: 0 5px 0 2px; }
```
